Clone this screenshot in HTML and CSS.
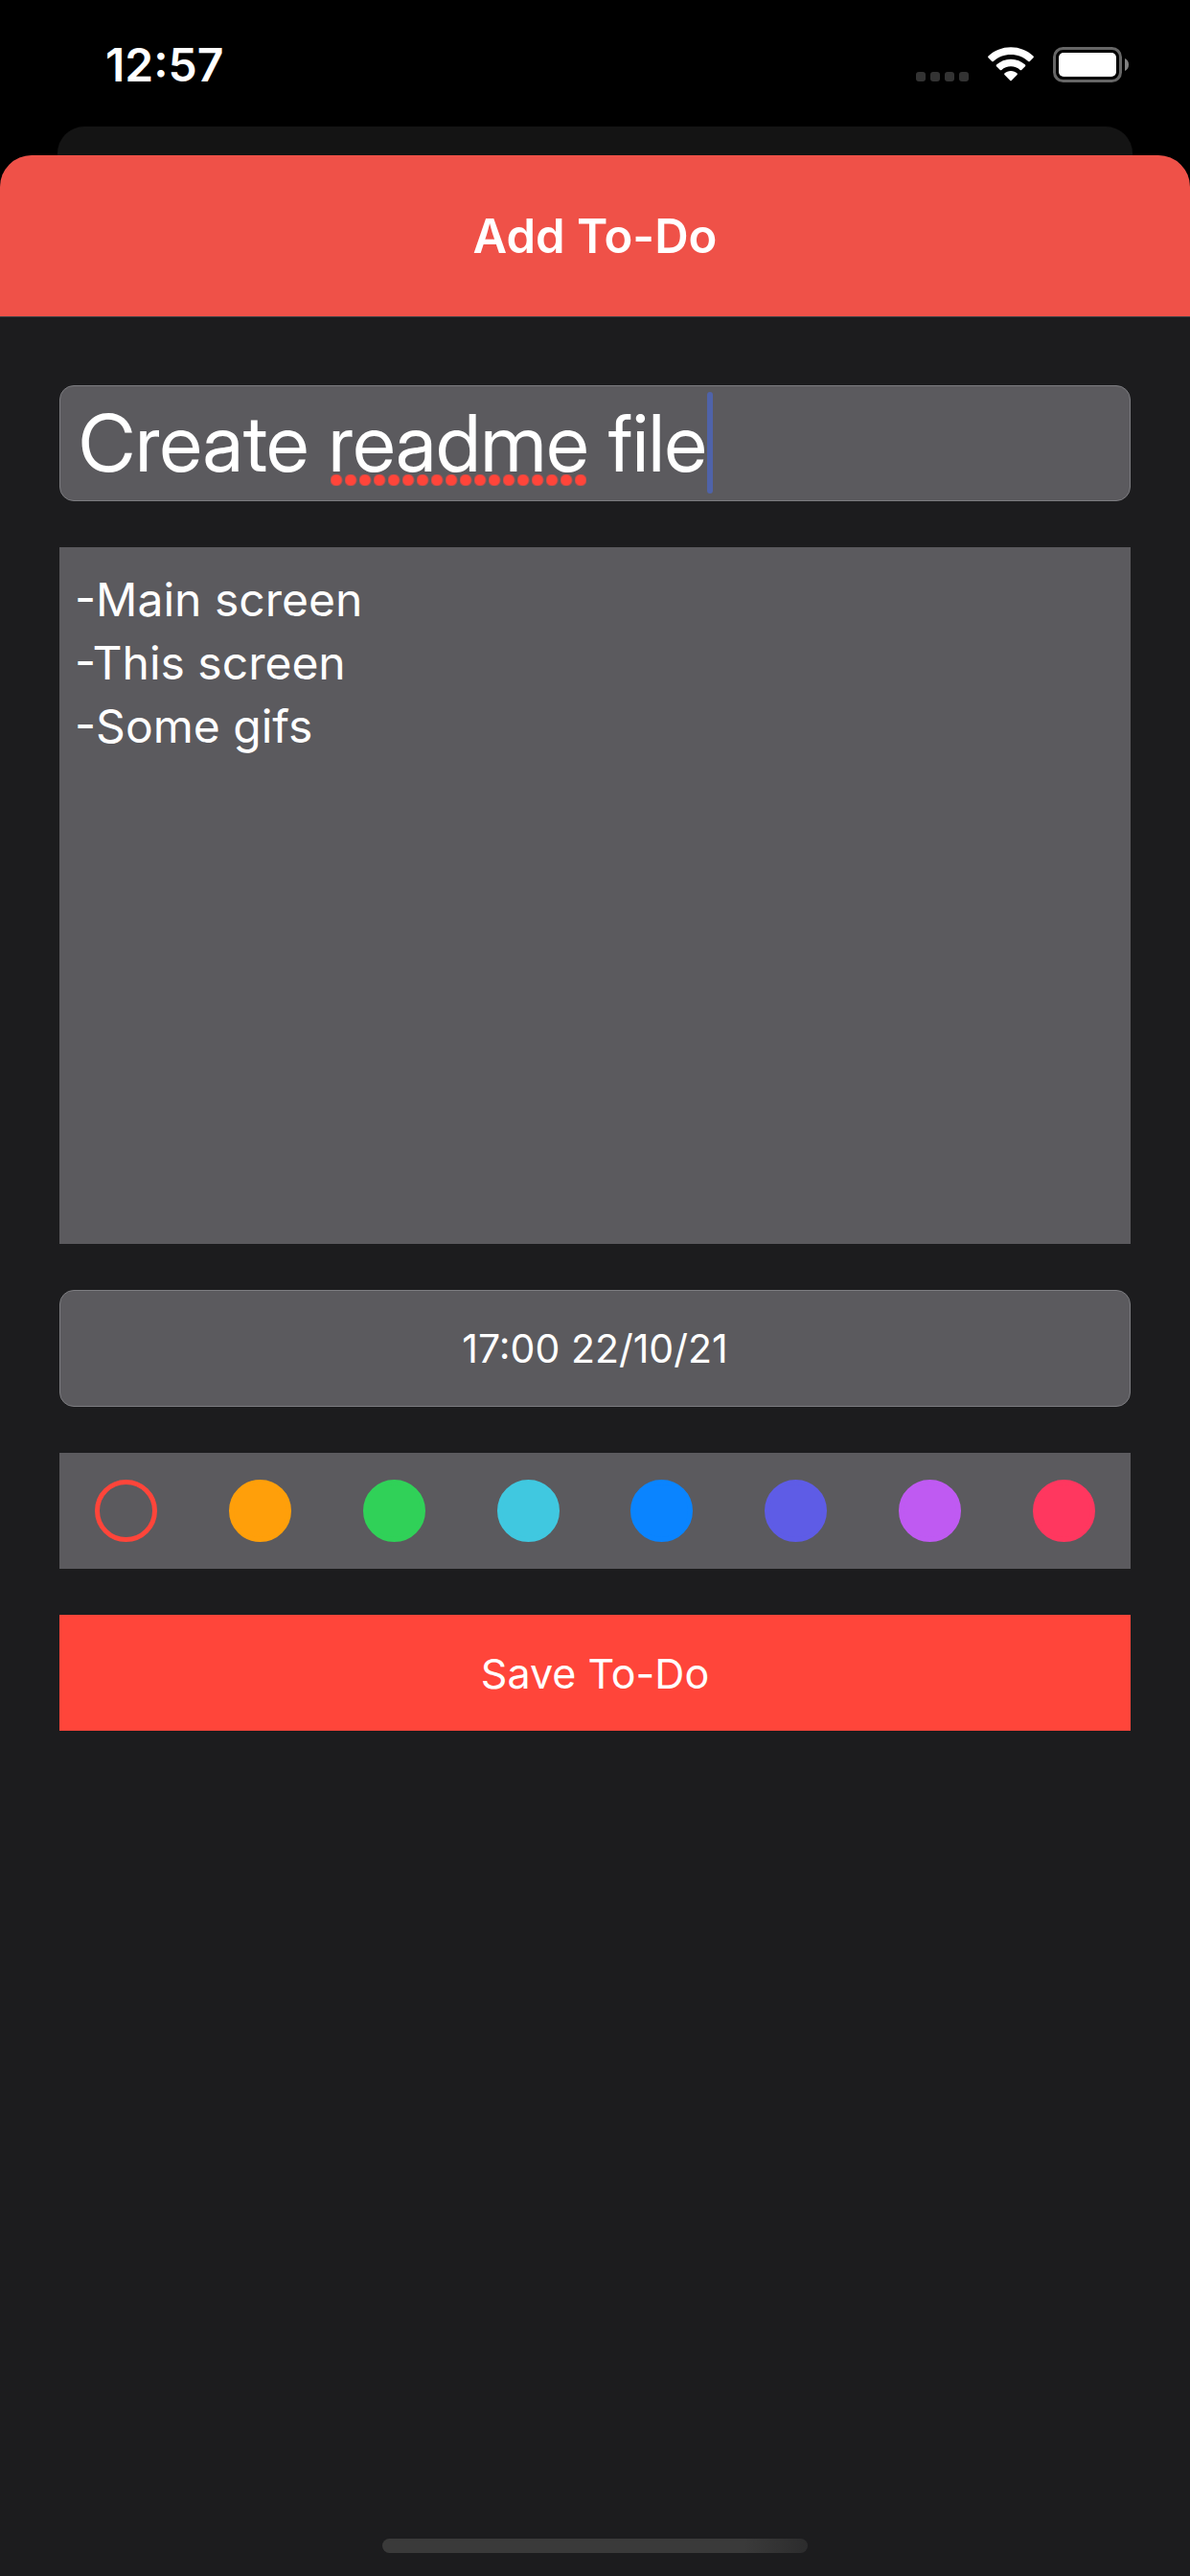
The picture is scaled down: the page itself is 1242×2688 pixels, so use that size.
FILE: index.html
```html
<!DOCTYPE html>
<html lang="en">
<head>
<meta charset="utf-8">
<meta name="viewport" content="width=device-width, initial-scale=1">
<title>Add To-Do</title>
<link rel="stylesheet" href="styles.css">
</head>
<body>
<div class="status-bar">
  <time class="clock">12:57</time>
  <div class="status-icons">
    <svg class="cellular" width="55" height="10" viewBox="0 0 55 10" fill="#333" aria-hidden="true">
      <rect width="10" height="10" rx="3"/>
      <rect x="15" width="10" height="10" rx="3"/>
      <rect x="30" width="10" height="10" rx="3"/>
      <rect x="45" width="10" height="10" rx="3"/>
    </svg>
    <svg width="48" height="37" viewBox="0 0 48 37" fill="#fff" aria-hidden="true">
      <path d="M24 0.3C33 .3 41.300 3.700 47.500 9.500Q48.300 10.300 47.500 11.200L43.800 14.900Q43 15.600 42.200 14.900C37.300 10.400 30.900 7.900 24 7.900S10.700 10.400 5.800 14.900Q5 15.600 4.200 14.900L.5 11.200Q-.3 10.300 .5 9.500C6.700 3.700 15 .3 24 .3Z"/>
      <path d="M24 12.700C29.800 12.700 35 14.900 39 18.500Q39.800 19.400 39 20.200L35.200 23.900Q34.400 24.600 33.600 23.900C31 21.600 27.700 20.300 24 20.300S17 21.600 14.400 23.900Q13.600 24.600 12.800 23.900L9 20.200Q8.200 19.400 9 18.500C13 14.900 18.200 12.700 24 12.700Z"/>
      <path d="M24 25.100C26.600 25.100 28.800 26 30.600 27.500Q31.300 28.300 30.600 29.100L24.700 35.100Q24 35.800 23.300 35.100L17.400 29.100Q16.700 28.300 17.400 27.500C19.200 26 21.400 25.100 24 25.100Z"/>
    </svg>
    <svg width="79" height="37" viewBox="0 0 79 37" aria-hidden="true">
      <rect x="1.500" y="1.500" width="69" height="34" rx="9" fill="none" stroke="#666" stroke-width="3"/>
      <rect x="6" y="6" width="60" height="25" rx="5" fill="#fff"/>
      <path d="M75 12C77.500 13 79 15.500 79 18.500S77.500 24 75 25Z" fill="#808080"/>
    </svg>
  </div>
</div>
<div class="card-behind"></div>
<main class="sheet">
  <header class="sheet-header"><h1>Add To-Do</h1></header>
  <form class="todo-form">
    <div class="title-field">
      <input class="field title-input" type="text" aria-label="Title" value="Create readme file" spellcheck="false">
      <span class="misspelling"></span>
      <span class="caret"></span>
    </div>
    <textarea class="notes" aria-label="Notes" spellcheck="false">-Main screen
-This screen
-Some gifs</textarea>
    <input class="field date-input" type="text" aria-label="Due date" value="17:00 22/10/21">
    <fieldset class="palette" aria-label="Color">
      <input class="swatch red" type="radio" name="color" aria-label="Red" checked>
      <input class="swatch orange" type="radio" name="color" aria-label="Orange">
      <input class="swatch green" type="radio" name="color" aria-label="Green">
      <input class="swatch teal" type="radio" name="color" aria-label="Teal">
      <input class="swatch blue" type="radio" name="color" aria-label="Blue">
      <input class="swatch indigo" type="radio" name="color" aria-label="Indigo">
      <input class="swatch purple" type="radio" name="color" aria-label="Purple">
      <input class="swatch pink" type="radio" name="color" aria-label="Pink">
    </fieldset>
    <button class="save" type="button">Save To-Do</button>
  </form>
  <div class="home-indicator"></div>
</main>
</body>
</html>
```
FILE: styles.css
```css
* {
  box-sizing: border-box;
}

body {
  margin: 0;
  min-height: 100vh;
  display: flex;
  flex-direction: column;
  background: #000;
  color: #fff;
  font-family: Inter, "Liberation Sans", sans-serif;
}

.status-bar {
  height: 132px;
  padding: 3px 64px 0 110px;
  display: flex;
  justify-content: space-between;
  align-items: center;
}

.clock {
  font-size: 48px;
  font-weight: 600;
}

.status-icons {
  display: flex;
  gap: 20px;
}

.cellular {
  margin: 26px 0 0;
}

.card-behind {
  height: 30px;
  margin: 0 60px;
  border-radius: 28px 28px 0 0;
  background: #141414;
}

.sheet {
  flex: 1;
  display: flex;
  flex-direction: column;
  border-radius: 33px 33px 0 0;
  overflow: hidden;
  background: #1c1c1e;
}

.sheet-header {
  height: 169px;
  display: flex;
  align-items: center;
  justify-content: center;
  background: #ef5148;
  border-bottom: 1px solid #444446;
}

.sheet-header h1 {
  margin: 0;
  font-size: 49px;
  font-weight: 600;
}

.todo-form {
  flex: 1;
  display: flex;
  flex-direction: column;
  gap: 48px;
  padding: 71px 62px 48px;
}

.field,
.notes,
.save {
  display: block;
  width: 100%;
  margin: 0;
  color: #fff;
  font-family: inherit;
  outline: none;
}

.field {
  height: 121px;
  border: 1px solid #7c7c80;
  border-radius: 15px;
  background: #5b5a5e;
}

.title-field {
  position: relative;
}

.title-input {
  padding: 0 19px;
  font-family: "Inter Display", Inter, "Liberation Sans", sans-serif;
  font-size: 82px;
}

/* Spell-check dots under "readme" */
.misspelling {
  position: absolute;
  left: 283px;
  top: 93px;
  width: 267px;
  height: 12px;
  background: radial-gradient(circle at 6px 6px, #ff453a 5px, transparent 7px) 0 0 / 15px 12px;
}

.caret {
  position: absolute;
  left: 676px;
  top: 7px;
  width: 6px;
  height: 106px;
  border-radius: 3px;
  background: #4f63a9;
}

.notes {
  height: 727px;
  padding: 22px 16px;
  border: 0;
  border-radius: 0;
  background: #5b5a5e;
  font-size: 48px;
  line-height: 66px;
  resize: none;
}

.date-input {
  height: 122px;
  padding: 0;
  font-size: 41px;
  text-align: center;
}

.palette {
  margin: 0;
  padding: 28px 0;
  border: 0;
  display: grid;
  grid-template-columns: repeat(8, 1fr);
  justify-items: center;
  background: #5b5a5e;
}

.swatch {
  appearance: none;
  width: 65px;
  height: 65px;
  margin: 0;
  border: 5px solid currentColor;
  border-radius: 50%;
  background: currentColor;
}

.swatch:checked {
  background: transparent;
}

.red { color: #ff453a; }
.orange { color: #ff9f0a; }
.green { color: #30d158; }
.teal { color: #40c8e0; }
.blue { color: #0a84ff; }
.indigo { color: #5e5ce6; }
.purple { color: #bf5af2; }
.pink { color: #ff375f; }

.save {
  height: 121px;
  padding: 0;
  border: 0;
  background: #ff453a;
  font-size: 43px;
}

.home-indicator {
  width: 444px;
  height: 15px;
  margin: 0 auto 24px;
  border-radius: 8px;
  background: linear-gradient(90deg, #3a3a3a 85%, #2c2c2d);
}
```
